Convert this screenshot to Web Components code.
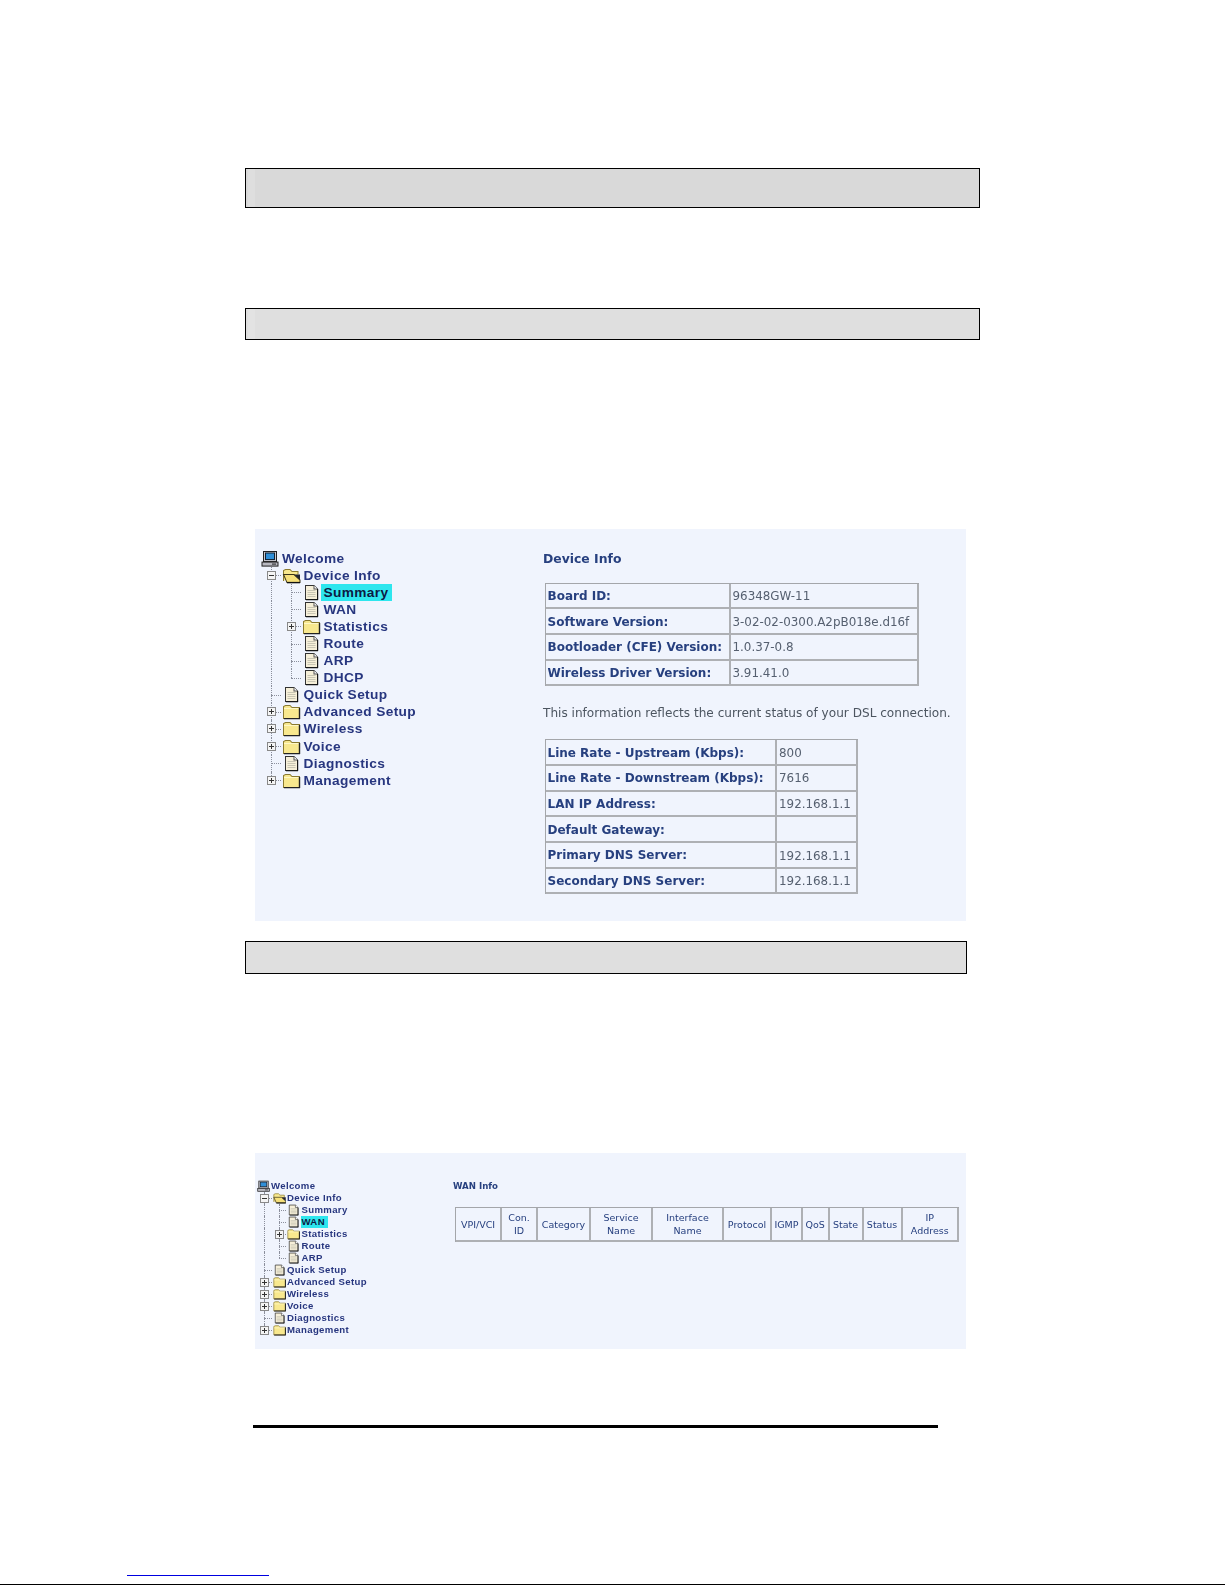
<!DOCTYPE html>
<html lang="en">
<head>
<meta charset="utf-8">
<title>Device Info</title>
<style>
  html, body { margin: 0; background: #fff; }
  body { height: 1585px; overflow: hidden; font-family: "DejaVu Sans", sans-serif; }
</style>
</head>
<body>
<manual-page>
  <gray-bar style="--top:168px;--h:40px;--w:735px;--bg:#d9d9d9;--strip:#dedede"></gray-bar>
  <gray-bar style="--top:100px;--h:31.5px;--w:735px;--bg:#dfdfdf;--strip:#e3e3e3"></gray-bar>

  <shot-panel style="--top:189.5px;--h:392px;--pad:20.5px;--left:6px;--col:282px;--cell:20px;--row:17.1px;--tree-font:13.7px;--tree-space:.38px;--label-pad:2.5px">
    <tree-row slot="tree" kind="monitor">Welcome</tree-row>
    <tree-row slot="tree" kind="open" toggle="minus">Device Info</tree-row>
    <tree-row slot="tree" kind="doc" guides="1" selected>Summary</tree-row>
    <tree-row slot="tree" kind="doc" guides="1">WAN</tree-row>
    <tree-row slot="tree" kind="folder" guides="1" toggle="plus">Statistics</tree-row>
    <tree-row slot="tree" kind="doc" guides="1">Route</tree-row>
    <tree-row slot="tree" kind="doc" guides="1">ARP</tree-row>
    <tree-row slot="tree" kind="doc" guides="1" end>DHCP</tree-row>
    <tree-row slot="tree" kind="doc">Quick Setup</tree-row>
    <tree-row slot="tree" kind="folder" toggle="plus">Advanced Setup</tree-row>
    <tree-row slot="tree" kind="folder" toggle="plus">Wireless</tree-row>
    <tree-row slot="tree" kind="folder" toggle="plus">Voice</tree-row>
    <tree-row slot="tree" kind="doc">Diagnostics</tree-row>
    <tree-row slot="tree" kind="folder" toggle="plus" end>Management</tree-row>

    <info-heading style="--h:17px;--font:12.4px">Device Info</info-heading>
    <info-table style="--cols:185px 188.5px;--rh:25.7px;--ml:1.5px;--mt:16px;--font:12px;--value-font:11.9px">
      <info-cell head>Board ID:</info-cell><info-cell>96348GW-11</info-cell>
      <info-cell head>Software Version:</info-cell><info-cell>3-02-02-0300.A2pB018e.d16f</info-cell>
      <info-cell head>Bootloader (CFE) Version:</info-cell><info-cell>1.0.37-0.8</info-cell>
      <info-cell head>Wireless Driver Version:</info-cell><info-cell>3.91.41.0</info-cell>
    </info-table>
    <info-note>This information reflects the current status of your DSL connection.</info-note>
    <info-table style="--cols:231.5px 81px;--rh:25.7px;--ml:1.5px;--mt:17px;--font:12px;--value-font:11.9px">
      <info-cell head>Line Rate - Upstream (Kbps):</info-cell><info-cell>800</info-cell>
      <info-cell head>Line Rate - Downstream (Kbps):</info-cell><info-cell>7616</info-cell>
      <info-cell head>LAN IP Address:</info-cell><info-cell>192.168.1.1</info-cell>
      <info-cell head>Default Gateway:</info-cell><info-cell></info-cell>
      <info-cell head>Primary DNS Server:</info-cell><info-cell>192.168.1.1</info-cell>
      <info-cell head>Secondary DNS Server:</info-cell><info-cell>192.168.1.1</info-cell>
    </info-table>
  </shot-panel>

  <gray-bar style="--top:20px;--h:33px;--w:722px;--bg:#dfdfdf;--strip:#dfdfdf"></gray-bar>

  <shot-panel style="--top:179px;--h:196px;--pad:27px;--left:2px;--col:196px;--cell:14.5px;--row:12px;--tree-font:9.6px;--tree-space:.34px;--label-pad:1px">
    <tree-row slot="tree" kind="monitor">Welcome</tree-row>
    <tree-row slot="tree" kind="open" toggle="minus">Device Info</tree-row>
    <tree-row slot="tree" kind="doc" guides="1">Summary</tree-row>
    <tree-row slot="tree" kind="doc" guides="1" selected>WAN</tree-row>
    <tree-row slot="tree" kind="folder" guides="1" toggle="plus">Statistics</tree-row>
    <tree-row slot="tree" kind="doc" guides="1">Route</tree-row>
    <tree-row slot="tree" kind="doc" guides="1" end>ARP</tree-row>
    <tree-row slot="tree" kind="doc">Quick Setup</tree-row>
    <tree-row slot="tree" kind="folder" toggle="plus">Advanced Setup</tree-row>
    <tree-row slot="tree" kind="folder" toggle="plus">Wireless</tree-row>
    <tree-row slot="tree" kind="folder" toggle="plus">Voice</tree-row>
    <tree-row slot="tree" kind="doc">Diagnostics</tree-row>
    <tree-row slot="tree" kind="folder" toggle="plus" end>Management</tree-row>

    <info-heading style="--h:12px;--font:8.6px">WAN Info</info-heading>
    <info-table style="--cols:46px 36px 53px 62px 71px 48px 31px 26.5px 34px 39px 56.5px;--rh:34px;--ml:2px;--mt:15px;--font:9.5px;--value-font:9.5px">
      <info-cell col>VPI/VCI</info-cell><info-cell col>Con.<br>ID</info-cell><info-cell col>Category</info-cell>
      <info-cell col>Service<br>Name</info-cell><info-cell col>Interface<br>Name</info-cell><info-cell col>Protocol</info-cell>
      <info-cell col>IGMP</info-cell><info-cell col>QoS</info-cell><info-cell col>State</info-cell>
      <info-cell col>Status</info-cell><info-cell col>IP<br>Address</info-cell>
    </info-table>
  </shot-panel>

  <page-footer></page-footer>
</manual-page>

<script>
// paginita del manual: barras grises + dos capturas del router
class ManualPage extends HTMLElement {
  constructor () {
    super();
    this.attachShadow({ mode: "open" });
    this.shadowRoot.innerHTML = `
      <style>
        :host { display: flex; flex-direction: column; height: 1585px; }
      </style>
      <slot></slot>`;
  }
}

class GrayBar extends HTMLElement {
  constructor () {
    super();
    this.attachShadow({ mode: "open" });
    this.shadowRoot.innerHTML = `
      <style>
        :host {
          display: block;
          box-sizing: border-box;
          flex: none;
          margin: var(--top) 0 0 245px;
          width: var(--w);
          height: var(--h);
          border: 1px solid #000;
          background: linear-gradient(90deg, var(--bg) 2px, var(--strip) 2px, var(--strip) 9px, var(--bg) 9px);
        }
      </style>`;
  }
}

class ShotPanel extends HTMLElement {
  constructor () {
    super();
    this.attachShadow({ mode: "open" });
    this.shadowRoot.innerHTML = `
      <style>
        :host {
          display: grid;
          box-sizing: border-box;
          flex: none;
          grid-template-columns: var(--col) 1fr;
          margin: var(--top) 0 0 255px;
          width: 711px;
          height: var(--h);
          padding: var(--pad) 0 0 var(--left);
          background: #f0f4fd;
        }
        .tree, .info { filter: blur(.4px); }
        .tree { display: flex; flex-direction: column; }
        .info { display: flex; flex-direction: column; align-items: flex-start; }
      </style>
      <div class="tree"><slot name="tree"></slot></div>
      <div class="info"><slot></slot></div>`;
  }
}

const ICONS = {
  monitor: `<rect x="2.5" y="1.5" width="13" height="10" fill="#c8c8d0" stroke="#222"/>
    <rect x="4.5" y="3" width="9" height="6.5" fill="#2f8fd8" stroke="#123"/>
    <rect x="1" y="12" width="16" height="4" fill="#b8b8c0" stroke="#222"/>
    <path d="M11 14h4" stroke="#222"/>`,
  folder: `<path d="M2.5 5.5 L2.5 3.5 L4.5 2.5 L9 2.5 L11 4.5 L18.5 4.5 L18.5 15.5 L2.5 15.5Z" fill="#f8e88e" stroke="#8a7a30"/>
    <path d="M3 5.5h15" stroke="#fff8c8"/><path d="M3 15.5h16M18.5 5v11" stroke="#222" stroke-width="1.4"/>`,
  open: `<path d="M2.5 14 L2.5 3.5 L4.5 2.5 L9 2.5 L11 4.5 L17 4.5 L17 7.5" fill="#f8e88e" stroke="#8a7a30"/>
    <path d="M2.5 7.5 L13 7.5 L19 13 L19 15.5 L6 15.5Z" fill="#f6e07a" stroke="#3a3418"/>
    <path d="M13 7.5 L19 13 L19 7.5Z" fill="#22242e"/><path d="M6 15.5h13" stroke="#111" stroke-width="1.4"/>`,
  doc: `<path d="M4.5 1.5 H13 L16.5 5 V15.5 H4.5Z" fill="#f6efd8" stroke="#333"/>
    <path d="M13 1.5 V5 H16.5" fill="#fff" stroke="#555"/>
    <path d="M6.5 6.5h8M6.5 8.5h8M6.5 10.5h8M6.5 12.5h8" stroke="#c9c6b4"/>
    <path d="M5 15.7h12M16.7 5v11" stroke="#111"/>`
};

class TreeRow extends HTMLElement {
  constructor () {
    super();
    this.attachShadow({ mode: "open" });
  }
  connectedCallback () {
    const kind = this.getAttribute("kind");
    const guides = Number(this.getAttribute("guides") || 0);
    const toggle = this.getAttribute("toggle");
    let cells = "";
    for (let i = 0; i < guides; i++) cells += `<span class="cell guide"></span>`;
    if (kind !== "monitor") {
      const box = toggle ? `<span class="box">${toggle === "plus" ? "<i></i>" : ""}</span>` : "";
      cells += `<span class="cell conn ${this.hasAttribute("end") ? "end" : ""}">${box}</span>`;
    }
    this.shadowRoot.innerHTML = `
      <style>
        :host {
          display: flex;
          align-items: stretch;
          height: var(--row);
          font: bold var(--tree-font)/var(--row) "Liberation Sans", sans-serif;
          letter-spacing: var(--tree-space);
          color: #27367f;
          white-space: nowrap;
        }
        .cell { position: relative; flex: none; width: var(--cell); }
        svg { display: block; flex: none; width: var(--cell); height: var(--row); }
        .guide::before, .conn::before {
          content: "";
          position: absolute;
          left: 50%;
          top: 0;
          bottom: 0;
          border-left: 1px dotted #8b8f9c;
        }
        .conn.end::before { bottom: 50%; }
        .conn::after {
          content: "";
          position: absolute;
          left: 50%;
          right: 0;
          top: 50%;
          border-top: 1px dotted #8b8f9c;
        }
        .box {
          position: absolute;
          z-index: 1;
          left: 50%;
          top: 50%;
          box-sizing: border-box;
          width: 9px;
          height: 9px;
          margin: -4.5px 0 0 -4px;
          border: 1px solid #888;
          background: #f4f4f4 linear-gradient(#333, #333) center / 5px 1px no-repeat;
        }
        .box i { position: absolute; left: 3px; top: 1px; width: 1px; height: 5px; background: #333; }
        .label { padding: 0 3px 0 var(--label-pad); }
        :host([kind="monitor"]) .label { margin-left: -1.5px; }
        :host([selected]) .label { background: #2ee6ee; color: #0c1a44; }
      </style>
      ${cells}
      <svg viewBox="0 0 20 17" preserveAspectRatio="none">${ICONS[kind]}</svg>
      <span class="label"><slot></slot></span>`;
  }
}

class InfoHeading extends HTMLElement {
  constructor () {
    super();
    this.attachShadow({ mode: "open" });
    this.shadowRoot.innerHTML = `
      <style>
        :host {
          display: block;
          height: var(--h);
          font: bold var(--font)/var(--h) "DejaVu Sans", sans-serif;
          color: #27407f;
        }
      </style>
      <slot></slot>`;
  }
}

class InfoNote extends HTMLElement {
  constructor () {
    super();
    this.attachShadow({ mode: "open" });
    this.shadowRoot.innerHTML = `
      <style>
        :host {
          display: block;
          margin-top: 18px;
          height: 18px;
          font: 12.1px/18px "DejaVu Sans", sans-serif;
          color: #4c5560;
          white-space: nowrap;
        }
      </style>
      <slot></slot>`;
  }
}

class InfoTable extends HTMLElement {
  constructor () {
    super();
    this.attachShadow({ mode: "open" });
    this.shadowRoot.innerHTML = `
      <style>
        :host {
          display: grid;
          grid-template-columns: var(--cols);
          grid-auto-rows: var(--rh);
          margin: var(--mt) 0 0 var(--ml);
          border-top: 1px solid #a4a6aa;
          border-left: 1px solid #a4a6aa;
        }
      </style>
      <slot></slot>`;
  }
}

class InfoCell extends HTMLElement {
  constructor () {
    super();
    this.attachShadow({ mode: "open" });
    this.shadowRoot.innerHTML = `
      <style>
        :host {
          display: flex;
          align-items: center;
          box-sizing: border-box;
          padding: 3px 2px 0;
          border-right: 2px solid #aeb0b4;
          border-bottom: 2px solid #aeb0b4;
          font: var(--value-font)/1.15 "DejaVu Sans", sans-serif;
          color: #566070;
          white-space: nowrap;
        }
        :host([head]) { font: bold var(--font)/1.15 "DejaVu Sans", sans-serif; color: #27407f; }
        :host([col]) {
          justify-content: center;
          text-align: center;
          padding: 0;
          font: var(--font)/13px "DejaVu Sans", sans-serif;
          color: #27407f;
        }
      </style>
      <div><slot></slot></div>`;
  }
}

class PageFooter extends HTMLElement {
  constructor () {
    super();
    this.attachShadow({ mode: "open" });
    this.shadowRoot.innerHTML = `
      <style>
        :host { display: flex; flex-direction: column; flex: 1; min-height: 0; }
        .rule { margin: 76px 0 0 253px; width: 685px; height: 3px; background: #000; }
        .link { margin: 147px 0 0 127px; width: 142px; height: 1px; background: #0000e0; }
        .edge { margin-top: 8px; height: 1px; background: #000; }
      </style>
      <div class="rule"></div>
      <div class="link"></div>
      <div class="edge"></div>`;
  }
}

customElements.define('manual-page', ManualPage);
customElements.define('gray-bar', GrayBar);
customElements.define('shot-panel', ShotPanel);
customElements.define('tree-row', TreeRow);
customElements.define('info-heading', InfoHeading);
customElements.define('info-note', InfoNote);
customElements.define('info-table', InfoTable);
customElements.define('info-cell', InfoCell);
customElements.define('page-footer', PageFooter);
</script>
</body>
</html>
